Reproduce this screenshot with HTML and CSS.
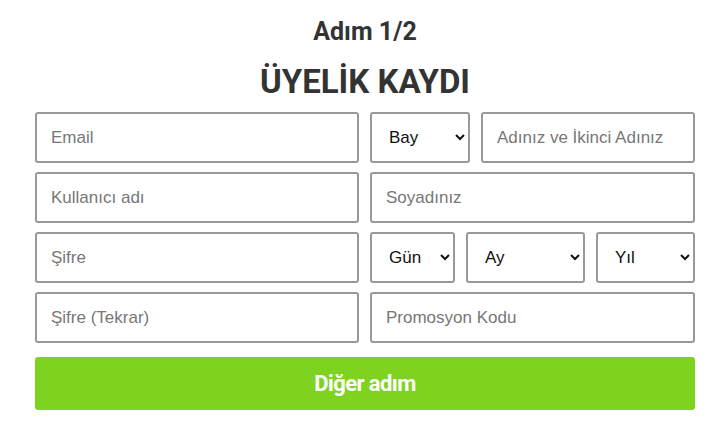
FILE: index.html
```html
<!DOCTYPE html>
<html lang="tr">
<head>
<meta charset="utf-8">
<link rel="stylesheet" href="styles.css">
</head>
<body>
<div class="page">
  <h2 class="step">Adım 1/2</h2>
  <h1 class="title">ÜYELİK KAYDI</h1>
  <form class="form">
    <div class="col">
      <input class="field" type="text" placeholder="Email">
      <input class="field" type="text" placeholder="Kullanıcı adı">
      <input class="field" type="password" placeholder="Şifre">
      <input class="field" type="password" placeholder="Şifre (Tekrar)">
    </div>
    <div class="col">
      <div class="row">
        <select class="field sel sel-bay"><option>Bay</option><option>Bayan</option></select>
        <input class="field grow" type="text" placeholder="Adınız ve İkinci Adınız">
      </div>
      <input class="field" type="text" placeholder="Soyadınız">
      <div class="row">
        <select class="field sel sel-gun"><option>Gün</option></select>
        <select class="field sel sel-ay"><option>Ay</option></select>
        <select class="field sel sel-yil"><option>Yıl</option></select>
      </div>
      <input class="field" type="text" placeholder="Promosyon Kodu">
    </div>
    <button class="next" type="button">Diğer adım</button>
  </form>
</div>
</body>
</html>
```

FILE: styles.css
```css
html, body {
  margin: 0;
  padding: 0;
  background: #fff;
}
.page {
  width: 660px;
  margin-left: 35px;
  font-family: Roboto, "Liberation Sans", sans-serif;
  color: #333;
}
.step {
  margin: 0;
  padding-top: 16px;
  font-size: 25px;
  line-height: 31px;
  font-weight: 700;
  text-align: center;
}
.title {
  margin: 0;
  padding-top: 15px;
  font-size: 33px;
  line-height: 39px;
  font-weight: 700;
  text-align: center;
}
.form {
  margin-top: 11px;
  display: grid;
  grid-template-columns: 324px 325px;
  column-gap: 11px;
}
.col {
  display: flex;
  flex-direction: column;
  gap: 9px;
}
.row {
  display: flex;
  gap: 11px;
}
.field {
  box-sizing: border-box;
  height: 51px;
  margin: 0;
  border: 2px solid #999;
  border-radius: 3px;
  background: #fff;
  padding: 0 14px;
  font-family: "Liberation Sans", Arial, sans-serif;
  font-size: 17px;
  color: #222;
  outline: none;
  width: 100%;
}
.field::placeholder {
  color: #777;
}
.grow {
  flex: 1;
  width: auto;
  min-width: 0;
}
.sel {
  padding: 0 8px 0 13px;
  color: #111;
}
.sel-bay { width: 100px; flex: none; }
.sel-gun { width: 85px; flex: none; }
.sel-ay { width: 119px; flex: none; }
.sel-yil { flex: 1; width: auto; min-width: 0; }
.next {
  grid-column: 1 / 3;
  margin-top: 14px;
  height: 53px;
  border: none;
  border-radius: 3px;
  background: #7ed321;
  color: #fff;
  font-family: Roboto, "Liberation Sans", sans-serif;
  font-size: 22px;
  font-weight: 700;
  letter-spacing: -0.6px;
  cursor: pointer;
}
```
